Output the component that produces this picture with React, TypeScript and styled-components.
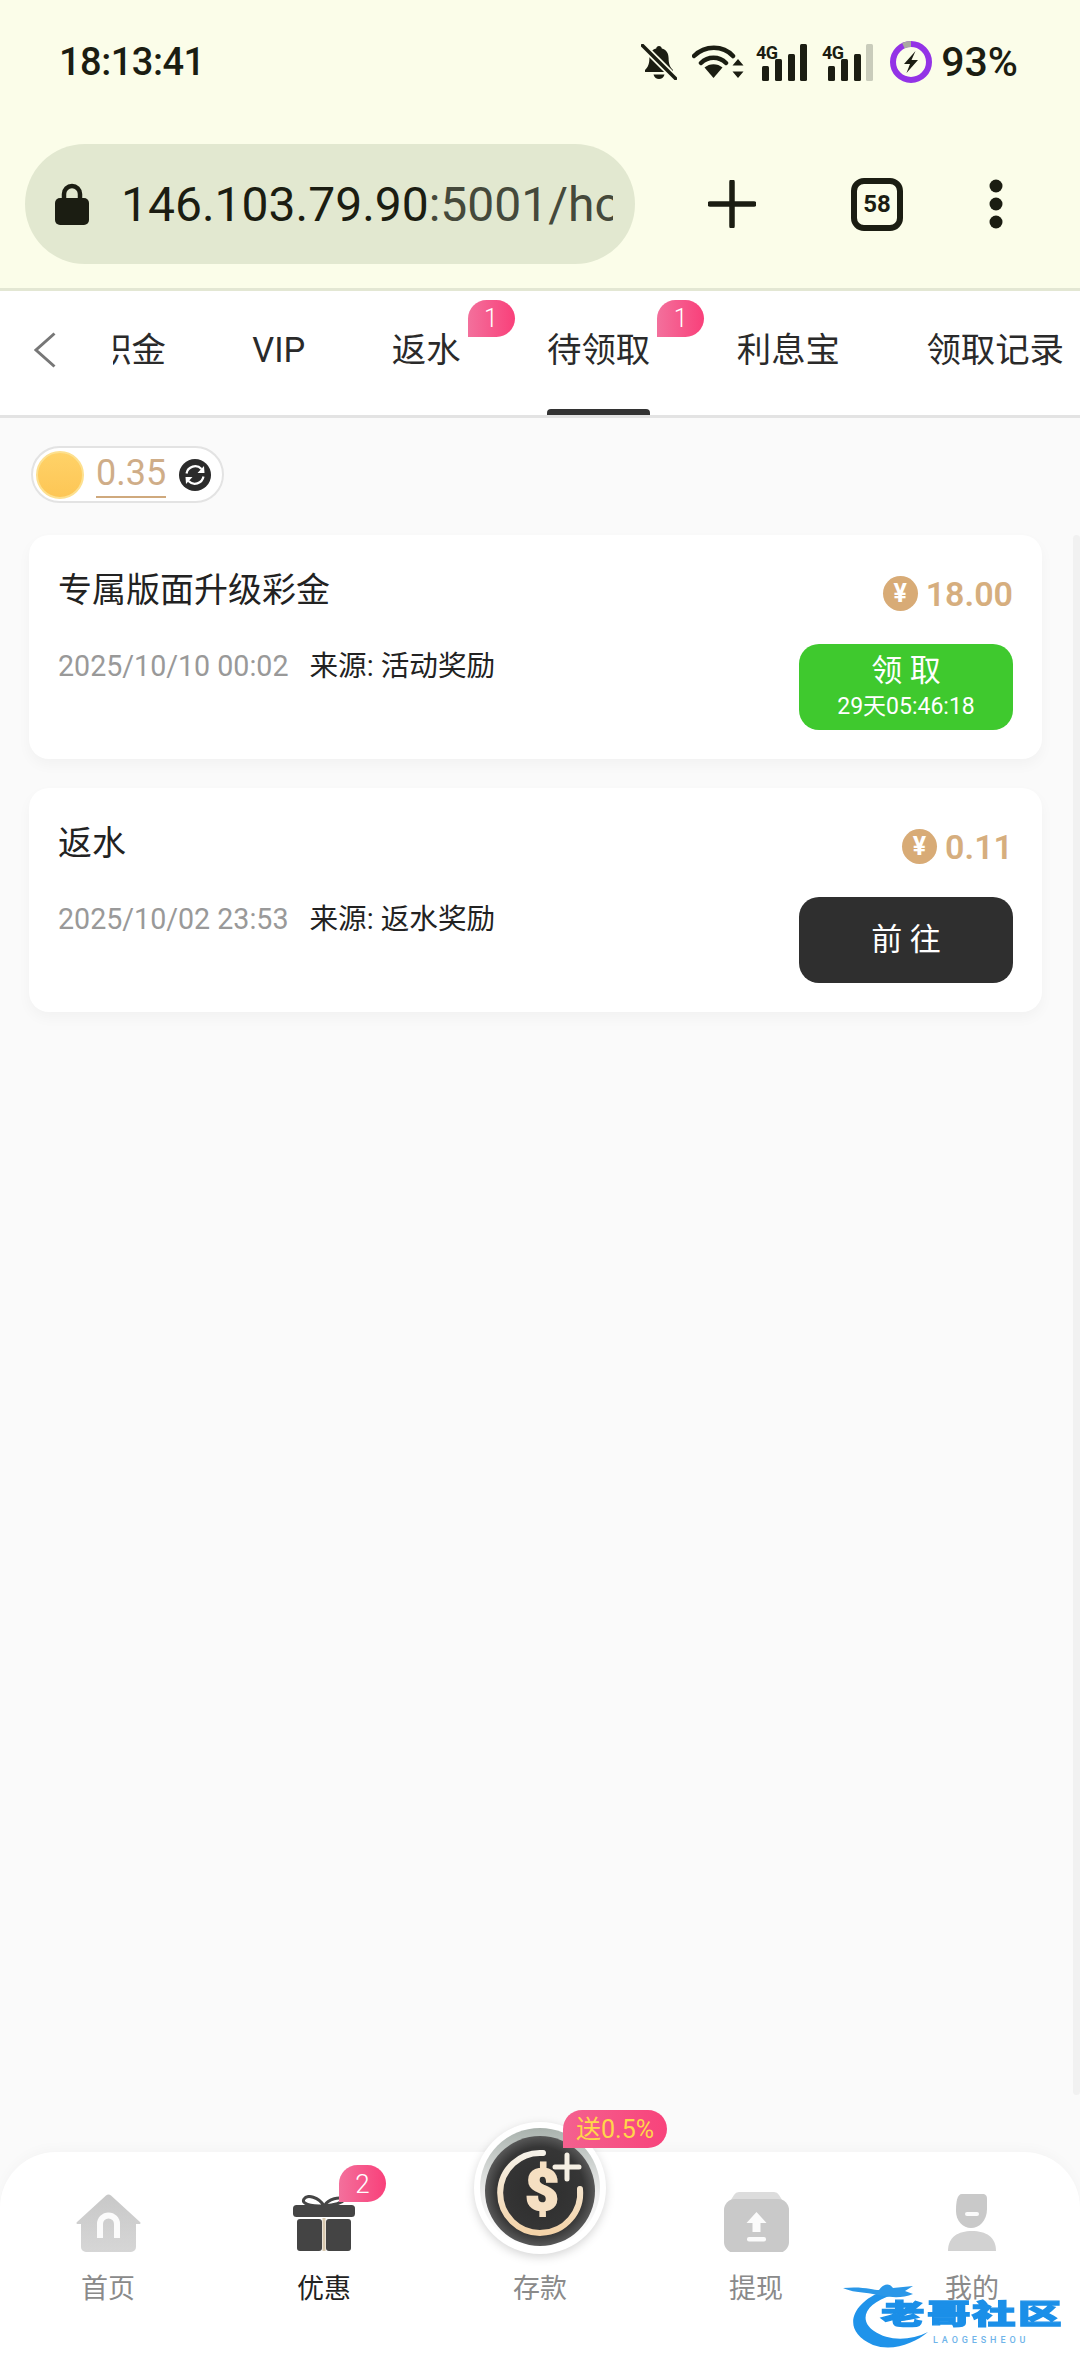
import React from "react";
import styled, { createGlobalStyle } from "styled-components";

const GlobalStyle = createGlobalStyle`
  html, body {
    margin: 0;
    padding: 0;
    background: #fafafa;
    font-family: Roboto, "Noto Sans CJK SC", sans-serif;
  }
  * {
    box-sizing: border-box;
  }
`;

const Page = styled.div`
  position: relative;
  display: flex;
  flex-direction: column;
  width: 1080px;
  height: 2376px;
  overflow: hidden;
  background: #fafafa;
`;

const Chrome = styled.header`
  flex-shrink: 0;
  height: 291px;
  background: #fbfde9;
  border-bottom: 3px solid #e3e7d3;
  color: #1b1d12;
`;

const StatusBar = styled.div`
  display: flex;
  align-items: center;
  justify-content: space-between;
  height: 124px;
  padding: 0 62px 0 59px;
`;

const Clock = styled.div`
  font-size: 38px;
  font-weight: 500;
  letter-spacing: -0.5px;
`;

const StatusIcons = styled.div`
  display: flex;
  align-items: center;
`;

const StatusGlyph = styled.svg<{ $gap: number }>`
  display: block;
  margin-left: ${(props) => props.$gap}px;
`;

const BatteryText = styled.span`
  margin-left: 9px;
  font-size: 41px;
  font-weight: 500;
  line-height: 48px;
`;

const Toolbar = styled.div`
  display: flex;
  align-items: center;
  height: 164px;
  padding: 0 0 4px 25px;
`;

const UrlPill = styled.div`
  display: flex;
  align-items: center;
  width: 610px;
  height: 120px;
  padding: 0 22px 0 30px;
  border-radius: 60px;
  background: #e2e8d0;
`;

const UrlText = styled.div`
  flex: 1;
  margin-left: 32px;
  overflow: hidden;
  white-space: nowrap;
  font-size: 48px;
  font-weight: 400;
  color: #1b1d12;

  span {
    color: #45493b;
  }
`;

const ToolSlot = styled.div<{ $gap: number }>`
  display: flex;
  margin-left: ${(props) => props.$gap}px;
`;

const TabCounter = styled.div`
  display: flex;
  align-items: center;
  justify-content: center;
  width: 52px;
  height: 53px;
  border: 6px solid #1b1d12;
  border-radius: 13px;
  font-size: 24px;
  font-weight: 700;
`;

const TabBar = styled.nav`
  display: flex;
  flex-shrink: 0;
  height: 127px;
  background: #fff;
  border-bottom: 3px solid #e3e3e3;
`;

const BackSlot = styled.div`
  display: flex;
  flex-shrink: 0;
  align-items: center;
  width: 113px;
  height: 118px;
  padding-left: 34px;
`;

const TabTrack = styled.div`
  flex: 1;
  display: flex;
  gap: 86.5px;
  overflow: hidden;
`;

const Tab = styled.div<{ $active?: boolean; $lead?: boolean }>`
  position: relative;
  flex-shrink: 0;
  height: 124px;
  margin-left: ${(props) => (props.$lead ? "-16px" : "0")};
  padding-top: 35px;
  font-size: 34.4px;
  line-height: 48px;
  color: #2a2a2a;

  &::after {
    content: "";
    display: ${(props) => (props.$active ? "block" : "none")};
    position: absolute;
    left: 0;
    right: 0;
    bottom: 0;
    height: 6px;
    border-radius: 4px 4px 0 0;
    background: #333;
  }
`;

const Bubble = styled.span`
  position: absolute;
  display: flex;
  align-items: center;
  justify-content: center;
  width: 47px;
  height: 37px;
  border-radius: 19px 19px 19px 0;
  background: linear-gradient(90deg, #f3709c, #f9407a);
  color: #fff;
  font-size: 25px;
  font-weight: 300;
  line-height: 1;
`;

const TabBubble = styled(Bubble)`
  top: 9px;
  left: calc(100% + 7px);
`;

const Main = styled.main`
  position: relative;
  flex: 1;
  padding: 28px 38px 0 29px;
`;

const ScrollThumb = styled.div`
  position: absolute;
  top: 117px;
  right: 0;
  width: 7px;
  height: 1560px;
  border-radius: 4px;
  background: #f1f1f1;
`;

const Balance = styled.div`
  display: flex;
  align-items: center;
  width: 193px;
  height: 57px;
  margin-left: 2px;
  padding-left: 3px;
  border: 2px solid #e3e3e3;
  border-radius: 29px;
  background: #fff;
`;

const Coin = styled.span`
  flex-shrink: 0;
  width: 48px;
  height: 48px;
  border: 2px solid #fde08f;
  border-radius: 50%;
  background: linear-gradient(180deg, #ffd268, #fdc655);
`;

const BalanceValue = styled.span`
  margin: 0 13px 0 12px;
  padding-bottom: 2px;
  border-bottom: 2px solid #cfa97d;
  color: #cfad88;
  font-size: 36px;
  line-height: 42px;
`;

const CardList = styled.div`
  display: flex;
  flex-direction: column;
  gap: 29px;
  margin-top: 32px;
`;

const Card = styled.section`
  display: flex;
  justify-content: space-between;
  height: 224px;
  padding: 31px 29px 0;
  border-radius: 20px;
  background: #fff;
  box-shadow: 0 6px 14px rgba(0, 0, 0, 0.035);
`;

const CardTitle = styled.div`
  font-size: 34px;
  line-height: 48px;
  color: #222;
`;

const CardMeta = styled.div`
  display: flex;
  gap: 21px;
  margin-top: 32px;
  font-size: 28.6px;
  line-height: 40px;
  color: #222;
`;

const MetaDate = styled.span`
  color: #999;
`;

const CardSide = styled.div`
  display: flex;
  flex-direction: column;
  align-items: flex-end;
`;

const Amount = styled.div`
  display: flex;
  align-items: center;
  gap: 8px;
  height: 35px;
  margin-top: 10px;
  color: #d6ae7e;
  font-size: 34px;
  font-weight: 600;
`;

const YenCoin = styled.span`
  display: flex;
  align-items: center;
  justify-content: center;
  width: 35px;
  height: 35px;
  border-radius: 50%;
  background: #d8ab76;
  color: #fff;
  font-size: 25px;
  font-weight: 700;
`;

const ActionButton = styled.div<{ $tone: "claim" | "go" }>`
  display: flex;
  flex-direction: column;
  align-items: center;
  justify-content: center;
  width: 214px;
  height: 86px;
  margin-top: 33px;
  border-radius: 20px;
  background: ${(props) => (props.$tone === "claim" ? "#3fc92e" : "#2f2f2f")};
  color: #fff;
`;

const ActionLabel = styled.span`
  font-size: 31px;
  line-height: 40px;
`;

const ActionTimer = styled.span`
  font-size: 23px;
  line-height: 32px;
`;

const BottomNav = styled.footer`
  position: relative;
  display: grid;
  flex-shrink: 0;
  grid-template-columns: repeat(5, 216px);
  height: 224px;
  border-radius: 56px 56px 0 0;
  background: #fff;
  box-shadow: 0 -4px 12px rgba(0, 0, 0, 0.025);
`;

const NavItem = styled.div`
  display: flex;
  flex-direction: column;
  align-items: center;
  padding-top: 40px;
`;

const NavIcon = styled.div`
  position: relative;
  display: flex;
  align-items: flex-end;
  justify-content: center;
  width: 70px;
  height: 60px;
`;

const NavBubble = styled(Bubble)`
  top: -27px;
  left: 50px;
  font-size: 26px;
`;

const NavLabel = styled.div<{ $active?: boolean }>`
  height: 31px;
  margin-top: 20px;
  overflow: hidden;
  font-size: 27px;
  line-height: 34px;
  color: ${(props) => (props.$active ? "#222" : "#8a8a8a")};
`;

const DepositButton = styled.div`
  position: absolute;
  top: -32px;
  left: 474px;
  width: 132px;
  height: 136px;
  border-radius: 50%;
  filter: drop-shadow(0 3px 5px rgba(0, 0, 0, 0.16));
`;

const DepositBadge = styled.span`
  position: absolute;
  top: -42px;
  left: 563px;
  display: flex;
  align-items: center;
  justify-content: center;
  width: 104px;
  height: 38px;
  border-radius: 19px 19px 19px 0;
  background: linear-gradient(90deg, #f4618f, #f8437b);
  color: #ffd64a;
  font-size: 25px;
  line-height: 1;
`;

const Watermark = styled.div`
  position: absolute;
  top: 2282px;
  left: 843px;
  width: 220px;
  height: 68px;
`;

const WatermarkName = styled.div`
  position: absolute;
  top: 15px;
  left: 38px;
  width: 182px;
  display: flex;
  justify-content: space-between;
  color: #1b8fe8;
  font-size: 32px;
  font-weight: 900;
  line-height: 36px;
  -webkit-text-stroke: 1.5px #1b8fe8;

  span {
    display: block;
    transform: scale(1.36, 0.86);
    transform-origin: left center;
    width: 45px;
  }
`;

const WatermarkLatin = styled.div`
  position: absolute;
  top: 52px;
  left: 90px;
  color: #6fb4ea;
  font-size: 9px;
  font-weight: 500;
  letter-spacing: 3.9px;
  line-height: 12px;
  white-space: nowrap;
`;

const BellOff = () => (
  <StatusGlyph $gap={0} width="36" height="36" viewBox="0 0 36 36">
    <path
      d="M18 2c1.6 0 2.6 1 2.8 2.6 4.6 1.2 6.8 5 6.8 9.6 0 5 1 8.400 4.400 11.800v2H4v-2c3.400-3.400 4.400-6.800 4.400-11.800 0-4.600 2.200-8.400 6.800-9.600C15.400 3 16.400 2 18 2z"
      fill="#1b1d12"
    />
    <path d="M12.500 30.500h11c-.8 3-3 4.500-5.500 4.500s-4.700-1.500-5.500-4.500z" fill="#1b1d12" />
    <path d="M1 1l34 34" stroke="#fbfde9" strokeWidth="7" />
    <path d="M1.500 1.500l33 33" stroke="#1b1d12" strokeWidth="3.500" strokeLinecap="round" />
  </StatusGlyph>
);

const Wifi = () => (
  <StatusGlyph $gap={15} width="52" height="34" viewBox="0 0 52 34">
    <path
      d="M2 11C13 0 31 0 41 11M9 18c7-7 18-7 25 0"
      fill="none"
      stroke="#1b1d12"
      strokeWidth="4.500"
      strokeLinecap="round"
    />
    <path d="M12.500 22.500c5-4.500 13-4.500 18 0L21.500 33z" fill="#1b1d12" />
    <path d="M46 14l5.500 6.500h-11zM46 33l-5.500-6.500h11z" fill="#1b1d12" />
  </StatusGlyph>
);

const Signal = ({ gap, full }: { gap: number; full: boolean }) => (
  <StatusGlyph $gap={gap} width="51" height="37" viewBox="0 0 51 37">
    <text x="0" y="15" fontFamily="Roboto, sans-serif" fontSize="18" fontWeight="700" fill="#1b1d12" textLength="22">
      4G
    </text>
    <rect x="6" y="22" width="7" height="15" rx="1.500" fill="#1b1d12" />
    <rect x="19" y="15" width="7" height="22" rx="1.500" fill="#1b1d12" />
    <rect x="32" y="10" width="7" height="27" rx="1.500" fill="#1b1d12" />
    <rect x="44" y="0" width="7" height="37" rx="1.500" fill={full ? "#1b1d12" : "#c9ccbb"} />
  </StatusGlyph>
);

const BatteryRing = () => (
  <StatusGlyph $gap={17} width="42" height="42" viewBox="0 0 42 42">
    <circle cx="21" cy="21" r="18" fill="none" stroke="#9333e6" strokeWidth="6" />
    <path d="M21 3a18 18 0 0 0-7.600 1.700" fill="none" stroke="#a9a9a0" strokeWidth="6" />
    <path d="M25.500 10L14 23h6l-3.500 9L28 19h-6.500z" fill="#1b1d12" />
  </StatusGlyph>
);

const Lock = () => (
  <svg width="34" height="42" viewBox="0 0 34 42">
    <path d="M9 18v-7a8 8 0 0 1 16 0v7" fill="none" stroke="#1b1d12" strokeWidth="4.500" />
    <rect x="0" y="15" width="34" height="27" rx="5" fill="#1b1d12" />
  </svg>
);

const Plus = () => (
  <svg width="48" height="48" viewBox="0 0 48 48">
    <path d="M24 2v44M2 24h44" stroke="#1b1d12" strokeWidth="5.500" strokeLinecap="round" />
  </svg>
);

const Dots = () => (
  <svg width="14" height="50" viewBox="0 0 14 50">
    <circle cx="7" cy="7" r="6.500" fill="#1b1d12" />
    <circle cx="7" cy="25" r="6.500" fill="#1b1d12" />
    <circle cx="7" cy="43" r="6.500" fill="#1b1d12" />
  </svg>
);

const Chevron = () => (
  <svg width="22" height="36" viewBox="0 0 22 36">
    <path d="M20.500 1.500L2 18l18.500 16.500" fill="none" stroke="#777" strokeWidth="3" />
  </svg>
);

const RefreshBadge = () => (
  <svg width="32" height="32" viewBox="0 0 32 32">
    <circle cx="16" cy="16" r="16" fill="#2b2b2b" />
    <path d="M7.500 14.500A8.800 8.800 0 0 1 22.500 10" fill="none" stroke="#fff" strokeWidth="2.200" />
    <path d="M24.500 17.500A8.800 8.800 0 0 1 9.500 22" fill="none" stroke="#fff" strokeWidth="2.200" />
    <path d="M25 7l.5 7h-7zM7 25l-.5-7h7z" fill="#fff" />
  </svg>
);

const HomeIcon = () => (
  <svg width="65" height="58" viewBox="0 0 65 58">
    <defs>
      <linearGradient id="homeFill" x1="0" y1="0" x2="0" y2="1">
        <stop offset="0" stopColor="#c8c8c8" />
        <stop offset="1" stopColor="#d6d6d6" />
      </linearGradient>
    </defs>
    <path
      d="M30 1.500a4 4 0 0 1 5 0l29 26.500c1 1 .5 2-.8 2H60v23a5 5 0 0 1-5 5H10a5 5 0 0 1-5-5V30H1.800C.5 30 0 29 1 28z"
      fill="url(#homeFill)"
    />
    <path
      d="M21 44V30a11.500 11.500 0 0 1 23 0v14h-6V30a5.500 5.500 0 0 0-11 0v14z"
      fill="#fbfbfb"
    />
  </svg>
);

const GiftIcon = () => (
  <svg width="62" height="57" viewBox="0 0 62 57">
    <path
      d="M31 11C26 2 14-1 11 4c-3 5 6 7 20 7zM31 11c5-8 15-9 21-7-3 4-9 6-21 7z"
      fill="none"
      stroke="#454545"
      strokeWidth="3"
    />
    <rect x="0" y="10" width="62" height="12" rx="3.500" fill="#454545" />
    <rect x="4" y="24" width="25" height="32" rx="3" fill="#444" />
    <rect x="33" y="24" width="25" height="32" rx="3" fill="#444" />
    <rect x="29.500" y="23" width="3" height="33" fill="#d8c8ae" />
  </svg>
);

const WithdrawIcon = () => (
  <svg width="65" height="60" viewBox="0 0 65 60">
    <path d="M15 0h35a6 6 0 0 1 5 3l5 8H5l5-8a6 6 0 0 1 5-3z" fill="#dcdcdc" />
    <rect x="0" y="7" width="65" height="54" rx="11" fill="#c9c9c9" />
    <path d="M32.500 20l10 11h-6v9h-8v-9h-6z" fill="#fbfbfb" />
    <rect x="23" y="45" width="19" height="4.500" rx="2" fill="#fbfbfb" />
  </svg>
);

const ProfileIcon = () => (
  <svg width="48" height="58" viewBox="0 0 48 58">
    <path
      d="M14 0h20c4 0 5 2 5 5v10c0 12-8 19-16 19S8 27 8 17C8 8 9 0 14 0z"
      fill="#c9c9c9"
    />
    <rect x="17" y="18" width="14" height="4" rx="2" fill="#fbfbfb" />
    <path d="M0 57c0-14 10-20 24-20s24 6 24 20z" fill="#d2d2d2" />
  </svg>
);

const DepositArt = () => (
  <svg width="132" height="136" viewBox="0 0 132 136">
    <defs>
      <linearGradient id="rimFill" x1="0" y1="0" x2="0" y2="1">
        <stop offset="0" stopColor="#a9b2ad" />
        <stop offset="0.55" stopColor="#eeeeee" />
        <stop offset="1" stopColor="#ffffff" />
      </linearGradient>
      <radialGradient id="discFill" cx="0.5" cy="0.5" r="0.5">
        <stop offset="0" stopColor="#2d2d2d" />
        <stop offset="0.8" stopColor="#363636" />
        <stop offset="1" stopColor="#585858" />
      </radialGradient>
      <linearGradient id="creamFill" x1="0" y1="0" x2="0" y2="1">
        <stop offset="0" stopColor="#f5f1e8" />
        <stop offset="1" stopColor="#f4d3a8" />
      </linearGradient>
    </defs>
    <circle cx="66" cy="68" r="66" fill="#fff" />
    <circle cx="66" cy="68" r="60" fill="url(#rimFill)" />
    <circle cx="66" cy="71" r="55" fill="url(#discFill)" />
    <path
      d="M69 33A40 40 0 1 0 106 69"
      fill="none"
      stroke="url(#creamFill)"
      strokeWidth="6"
      strokeLinecap="round"
    />
    <path d="M93 35v24M81 47h24" stroke="#f5efe3" strokeWidth="5" strokeLinecap="round" />
    <text
      x="68"
      y="90"
      textAnchor="middle"
      fontFamily="Roboto, sans-serif"
      fontSize="58"
      fontWeight="900"
      fill="#f5dfc2"
      stroke="#f5dfc2"
      strokeWidth="2"
    >
      $
    </text>
  </svg>
);

const DragonArt = () => (
  <svg width="100" height="68" viewBox="0 0 100 68">
    <path
      d="M40 9C10 20-4 48 30 63c20 7 42-2 55-13-18 9-40 9-54-1C15 38 22 21 50 13z"
      fill="#1f93ea"
    />
    <path
      d="M0 6c20-2 30 2 36 2 4-6 10-8 14-2l20-2-8 5 8 3c-14 6-30 2-40 0C18 10 8 10 0 6z"
      fill="#2a97e8"
    />
  </svg>
);

const tabs = ["积金", "VIP", "返水", "待领取", "利息宝", "领取记录"];
const tabBadges: Record<string, string> = { 返水: "1", 待领取: "1" };

const rewards = [
  { title: "专属版面升级彩金", amount: "18.00", date: "2025/10/10 00:02", source: "活动奖励", timer: "29天05:46:18" },
  { title: "返水", amount: "0.11", date: "2025/10/02 23:53", source: "返水奖励" },
];

export default function App() {
  return (
    <Page>
      <GlobalStyle />
      <Chrome>
        <StatusBar>
          <Clock>18:13:41</Clock>
          <StatusIcons>
            <BellOff />
            <Wifi />
            <Signal gap={12} full />
            <Signal gap={15} full={false} />
            <BatteryRing />
            <BatteryText>93%</BatteryText>
          </StatusIcons>
        </StatusBar>
        <Toolbar>
          <UrlPill>
            <Lock />
            <UrlText>
              146.103.79.90<span>:5001/home</span>
            </UrlText>
          </UrlPill>
          <ToolSlot $gap={73}>
            <Plus />
          </ToolSlot>
          <ToolSlot $gap={95}>
            <TabCounter>58</TabCounter>
          </ToolSlot>
          <ToolSlot $gap={86}>
            <Dots />
          </ToolSlot>
        </Toolbar>
      </Chrome>

      <TabBar>
        <BackSlot>
          <Chevron />
        </BackSlot>
        <TabTrack>
          {tabs.map((tab, index) => (
            <Tab key={tab} $lead={index === 0} $active={tab === "待领取"}>
              {tab}
              {tabBadges[tab] && <TabBubble>{tabBadges[tab]}</TabBubble>}
            </Tab>
          ))}
        </TabTrack>
      </TabBar>

      <Main>
        <ScrollThumb />
        <Balance>
          <Coin />
          <BalanceValue>0.35</BalanceValue>
          <RefreshBadge />
        </Balance>
        <CardList>
          {rewards.map((reward) => (
            <Card key={reward.title}>
              <div>
                <CardTitle>{reward.title}</CardTitle>
                <CardMeta>
                  <MetaDate>{reward.date}</MetaDate>
                  <span>来源: {reward.source}</span>
                </CardMeta>
              </div>
              <CardSide>
                <Amount>
                  <YenCoin>¥</YenCoin>
                  {reward.amount}
                </Amount>
                <ActionButton $tone={reward.timer ? "claim" : "go"}>
                  <ActionLabel>{reward.timer ? "领 取" : "前 往"}</ActionLabel>
                  {reward.timer && <ActionTimer>{reward.timer}</ActionTimer>}
                </ActionButton>
              </CardSide>
            </Card>
          ))}
        </CardList>
      </Main>

      <BottomNav>
        <NavItem>
          <NavIcon>
            <HomeIcon />
          </NavIcon>
          <NavLabel>首页</NavLabel>
        </NavItem>
        <NavItem>
          <NavIcon>
            <GiftIcon />
            <NavBubble>2</NavBubble>
          </NavIcon>
          <NavLabel $active>优惠</NavLabel>
        </NavItem>
        <NavItem>
          <NavIcon />
          <NavLabel>存款</NavLabel>
        </NavItem>
        <NavItem>
          <NavIcon>
            <WithdrawIcon />
          </NavIcon>
          <NavLabel>提现</NavLabel>
        </NavItem>
        <NavItem>
          <NavIcon>
            <ProfileIcon />
          </NavIcon>
          <NavLabel>我的</NavLabel>
        </NavItem>
        <DepositButton>
          <DepositArt />
        </DepositButton>
        <DepositBadge>送0.5%</DepositBadge>
      </BottomNav>

      <Watermark>
        <DragonArt />
        <WatermarkName>
          <span>老</span>
          <span>哥</span>
          <span>社</span>
          <span>区</span>
        </WatermarkName>
        <WatermarkLatin>LAOGESHEOU</WatermarkLatin>
      </Watermark>
    </Page>
  );
}
